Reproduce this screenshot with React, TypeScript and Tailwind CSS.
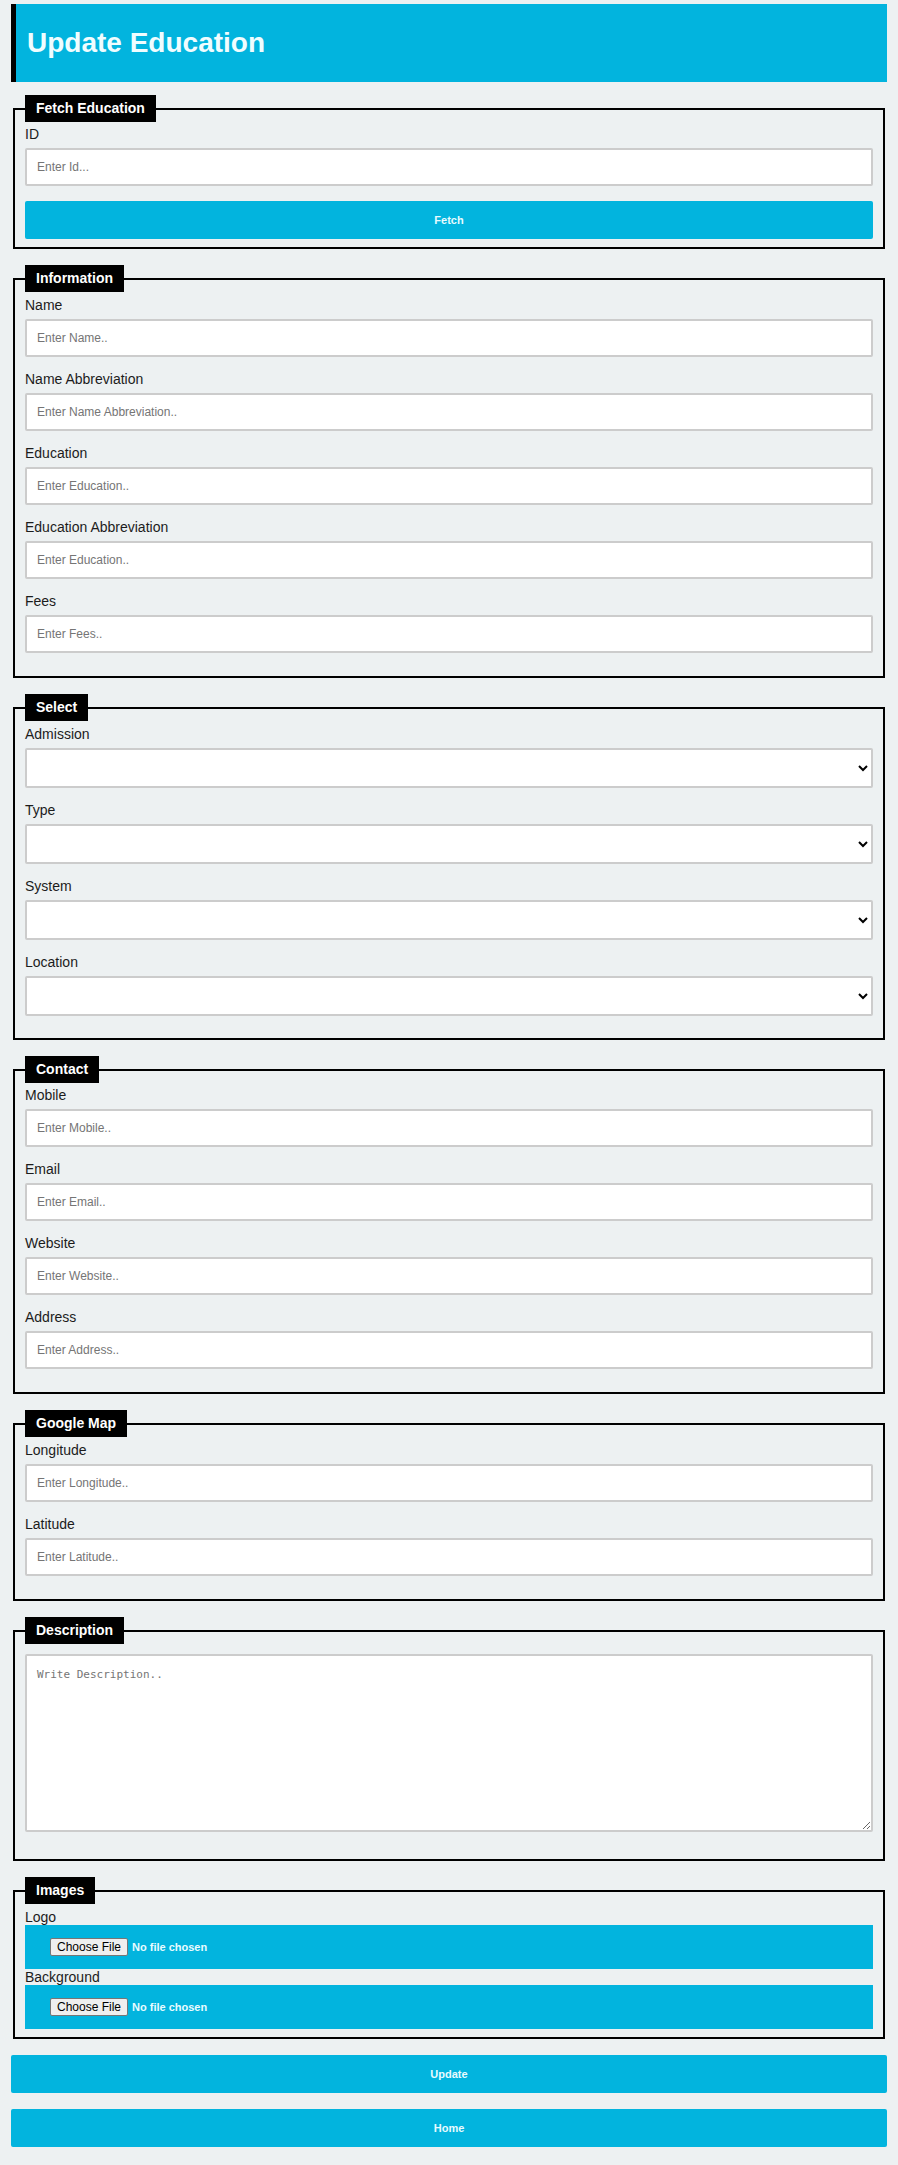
import type { ReactNode } from "react";

type Field = { id: string; label: string; placeholder: string; type?: string };

const control =
  "mt-1.5 mb-3.5 block w-full rounded-xs border-2 border-[#cccccc] bg-white text-xs text-black";
const button =
  "block h-[38px] w-full cursor-pointer rounded-xs bg-[#02b4de] text-center text-[11px] font-bold text-[#e8fbff]";

const information: Field[] = [
  { id: "name", label: "Name", placeholder: "Enter Name.." },
  { id: "name-abbreviation", label: "Name Abbreviation", placeholder: "Enter Name Abbreviation.." },
  { id: "education", label: "Education", placeholder: "Enter Education.." },
  { id: "education-abbreviation", label: "Education Abbreviation", placeholder: "Enter Education.." },
  { id: "fees", label: "Fees", placeholder: "Enter Fees.." },
];

const contact: Field[] = [
  { id: "mobile", label: "Mobile", placeholder: "Enter Mobile..", type: "tel" },
  { id: "email", label: "Email", placeholder: "Enter Email..", type: "email" },
  { id: "website", label: "Website", placeholder: "Enter Website.." },
  { id: "address", label: "Address", placeholder: "Enter Address.." },
];

const map: Field[] = [
  { id: "longitude", label: "Longitude", placeholder: "Enter Longitude.." },
  { id: "latitude", label: "Latitude", placeholder: "Enter Latitude.." },
];

const selects = ["Admission", "Type", "System", "Location"];
const files = ["Logo", "Background"];

function Section({ title, children }: { title: string; children: ReactNode }) {
  return (
    <fieldset className="mx-0.5 mb-4 min-w-0 border-2 border-black px-2.5 pb-2">
      <legend className="bg-black px-[11px] text-sm leading-[27px] font-bold text-white">{title}</legend>
      {children}
    </fieldset>
  );
}

function Label({ id, children }: { id: string; children: ReactNode }) {
  return (
    <label htmlFor={id} className="block text-sm leading-4 text-[#1c1c1c]">
      {children}
    </label>
  );
}

function TextField({ id, label, placeholder, type = "text" }: Field) {
  return (
    <>
      <Label id={id}>{label}</Label>
      <input
        id={id}
        type={type}
        placeholder={placeholder}
        className={`${control} h-[38px] px-2.5 placeholder:text-[#757575]`}
      />
    </>
  );
}

export default function App() {
  return (
    <div className="min-h-screen bg-[#edf1f2] px-[11px] pt-1 pb-4 font-['Liberation_Sans',Arial,sans-serif]">
      <h1 className="mb-[13px] border-l-[5px] border-black bg-[#02b4de] px-[11px] text-[28px] leading-[78px] font-bold text-[#f0fdff]">
        Update Education
      </h1>
      <form onSubmit={(e) => e.preventDefault()}>
        <Section title="Fetch Education">
          <div className="pt-1 pb-px">
            <TextField id="id" label="ID" placeholder="Enter Id..." />
          </div>
          <button type="button" className={button}>
            Fetch
          </button>
        </Section>

        <Section title="Information">
          <div className="pt-[5px] pb-px">
            {information.map((f) => (
              <TextField key={f.id} {...f} />
            ))}
          </div>
        </Section>

        <Section title="Select">
          <div className="pt-[5px]">
            {selects.map((name) => (
              <div key={name}>
                <Label id={name}>{name}</Label>
                <select id={name} className={`${control} h-10 px-0`} />
              </div>
            ))}
          </div>
        </Section>

        <Section title="Contact">
          <div className="pt-1 pb-px">
            {contact.map((f) => (
              <TextField key={f.id} {...f} />
            ))}
          </div>
        </Section>

        <Section title="Google Map">
          <div className="pt-[5px] pb-px">
            {map.map((f) => (
              <TextField key={f.id} {...f} />
            ))}
          </div>
        </Section>

        <Section title="Description">
          <div className="pt-2.5 pb-[19px]">
            <textarea
              aria-label="Description"
              placeholder="Write Description.."
              className="block h-[178px] w-full resize rounded-xs border-2 border-[#cccccc] bg-white px-2.5 py-3 font-['DejaVu_Sans_Mono',monospace] text-[11px] leading-[14px] placeholder:text-[#757575]"
            />
          </div>
        </Section>

        <Section title="Images">
          <div className="pt-[5px]">
            {files.map((name) => (
              <div key={name}>
                <Label id={name}>{name}</Label>
                <input
                  id={name}
                  type="file"
                  className="block h-11 w-full bg-[#02b4de] px-[25px] py-[13px] text-[11px] leading-[18px] font-bold text-[#e8fbff] file:mr-1 file:h-[18px] file:rounded-xs file:border file:border-solid file:border-[#767676] file:bg-[#efefef] file:px-1.5 file:text-xs file:leading-4 file:font-normal file:text-black"
                />
              </div>
            ))}
          </div>
        </Section>

        <div className="flex flex-col gap-4">
          <button type="submit" className={button}>
            Update
          </button>
          <button type="button" className={button}>
            Home
          </button>
        </div>
      </form>
    </div>
  );
}
